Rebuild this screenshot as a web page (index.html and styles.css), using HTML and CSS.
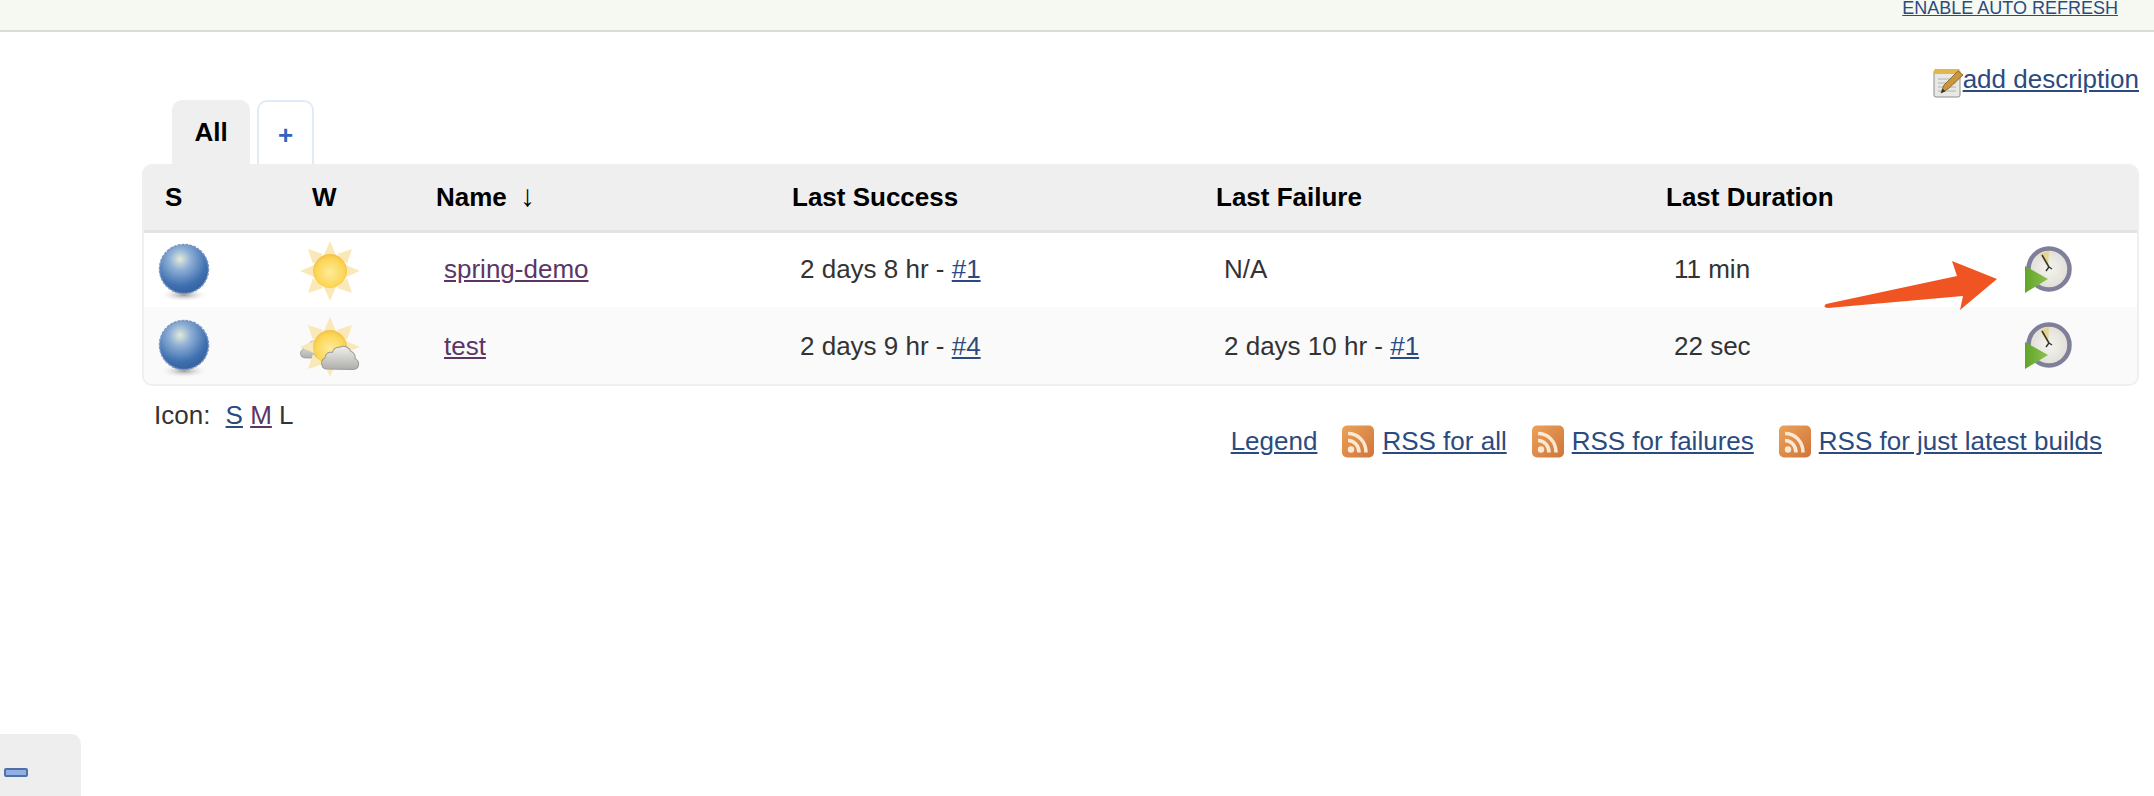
FILE: index.html
```html
<!DOCTYPE html>
<html lang="en">

<head>
    <meta charset="UTF-8">
    <title>All [Jenkins]</title>
    <link rel="stylesheet" href="styles.css">
</head>

<body>
    <!-- icon definitions -->
    <svg class="defs" width="0" height="0">
        <defs>
            <radialGradient id="ballGrad" cx="0.42" cy="0.3" r="0.72">
                <stop offset="0" stop-color="#e4ebd8" />
                <stop offset="0.3" stop-color="#8fb0d6" />
                <stop offset="0.75" stop-color="#3f70b0" />
                <stop offset="1" stop-color="#35609c" />
            </radialGradient>
            <radialGradient id="shadowGrad">
                <stop offset="0" stop-color="#999" />
                <stop offset="1" stop-color="#fff" stop-opacity="0" />
            </radialGradient>
            <radialGradient id="sunGrad" cx="0.5" cy="0.55" r="0.55">
                <stop offset="0" stop-color="#fdeb9c" />
                <stop offset="0.75" stop-color="#fcd655" />
                <stop offset="1" stop-color="#f2c146" />
            </radialGradient>
            <linearGradient id="cloudGrad" x1="0" y1="0" x2="0" y2="1">
                <stop offset="0" stop-color="#efefed" />
                <stop offset="1" stop-color="#aeaeab" />
            </linearGradient>
            <radialGradient id="clockGrad" cx="0.5" cy="0.5" r="0.55">
                <stop offset="0" stop-color="#f4f4ee" />
                <stop offset="1" stop-color="#dedbd4" />
            </radialGradient>
            <linearGradient id="triGrad" x1="0" y1="0" x2="1" y2="0">
                <stop offset="0" stop-color="#5fa528" />
                <stop offset="1" stop-color="#8cc152" />
            </linearGradient>
            <linearGradient id="rssGrad" x1="0" y1="0" x2="1" y2="1">
                <stop offset="0" stop-color="#eba258" />
                <stop offset="1" stop-color="#d0743a" />
            </linearGradient>

            <symbol id="ball" viewBox="0 0 52 60">
                <ellipse cx="26" cy="52" rx="25" ry="7" fill="url(#shadowGrad)" />
                <circle cx="26" cy="26" r="24.5" fill="url(#ballGrad)" stroke="#7b97c4" stroke-width="1.5" stroke-dasharray="3 1" />
            </symbol>

            <symbol id="sunRays" viewBox="0 0 60 60">
                <g fill="#fbe8b8">
                    <path d="M30 0l6 14h-12z" />
                    <path d="M30 60l-6-14h12z" />
                    <path d="M0 30l14-6v12z" />
                    <path d="M60 30l-14 6v-12z" />
                    <path d="M8 8l15 5-10 10z" />
                    <path d="M52 8l-5 15-10-10z" />
                    <path d="M8 52l5-15 10 10z" />
                    <path d="M52 52l-15-5 10-10z" />
                </g>
                <circle cx="30" cy="30" r="17" fill="url(#sunGrad)" />
            </symbol>

            <symbol id="cloud" viewBox="0 0 40 28">
                <path d="M7 27a5.500 5.500 0 0 1-2-10.500a5.500 5.500 0 0 1 7-5.500a7 7 0 0 1 7-5a8 8 0 0 1 11 4a6 6 0 0 1 4 7a5.500 5.500 0 0 1-1 10.500z" fill="url(#cloudGrad)" stroke="#9c9c9a" stroke-width="1" />
            </symbol>

            <symbol id="clock" viewBox="0 0 48 48">
                <circle cx="25" cy="23" r="20.500" fill="url(#clockGrad)" stroke="#7f7f9a" stroke-width="4.500" />
                <path d="M25 5l-9 3 8 14z" fill="#e6d592" />
                <path d="M18 9l7 12-3 4M25 21l3 2" fill="none" stroke="#333" stroke-width="1.500" />
                <path d="M1 20l23 13-23 14z" fill="url(#triGrad)" />
            </symbol>

            <symbol id="rss" viewBox="0 0 32 32">
                <rect width="32" height="32" rx="5" fill="url(#rssGrad)" />
                <circle cx="9" cy="24" r="3.200" fill="#fbe8d2" />
                <path d="M6 15c6 0 11 5 11 12M6 8c10 0 18 8 18 19" fill="none" stroke="#fbe8d2" stroke-width="3.600" />
            </symbol>

            <symbol id="note" viewBox="0 0 30 30">
                <rect x="1" y="2" width="26" height="27" rx="2" fill="#e8e8e4" stroke="#8c8c88" />
                <rect x="1" y="1" width="26" height="5" rx="1.500" fill="#e3b64c" />
                <path d="M5 11h18M5 15h18M5 19h18M5 23h18" stroke="#c4c4c0" stroke-width="1.500" />
                <path d="M8 25l3-8 14-14 5 4-15 14z" fill="#c9963e" stroke="#7d5c24" stroke-width="0.800" />
                <path d="M8 25l1.500-4.500 3 3z" fill="#333" />
            </symbol>
        </defs>
    </svg>

    <div class="topBar">
        <a href="#" class="autoRefresh">ENABLE AUTO REFRESH</a>
    </div>

    <main class="content">
        <div class="descRow">
            <svg class="noteIcon"><use href="#note" /></svg>
            <a href="#">add description</a>
        </div>

        <div class="tabs">
            <div class="tab active">All</div>
            <div class="tab add">+</div>
        </div>

        <div class="tableWrap">
            <table class="jobs">
                <thead>
                    <tr>
                        <th class="colS">S</th>
                        <th class="colW">W</th>
                        <th class="colName">Name <span class="sortArrow">↓</span></th>
                        <th class="colSuccess">Last Success</th>
                        <th class="colFailure">Last Failure</th>
                        <th class="colDuration">Last Duration</th>
                        <th class="colBuild"></th>
                    </tr>
                </thead>
                <tbody>
                    <tr>
                        <td><svg class="ballIcon"><use href="#ball" /></svg></td>
                        <td>
                            <span class="weather"><svg class="sunIcon"><use href="#sunRays" /></svg></span>
                        </td>
                        <td><a href="#" class="visited">spring-demo</a></td>
                        <td>2 days 8 hr - <a href="#">#1</a></td>
                        <td>N/A</td>
                        <td>11 min</td>
                        <td><svg class="buildIcon"><use href="#clock" /></svg></td>
                    </tr>
                    <tr class="alt">
                        <td><svg class="ballIcon"><use href="#ball" /></svg></td>
                        <td>
                            <span class="weather">
                                <svg class="cloudBack"><use href="#cloud" /></svg>
                                <svg class="sunIcon"><use href="#sunRays" /></svg>
                                <svg class="cloudFront"><use href="#cloud" /></svg>
                            </span>
                        </td>
                        <td><a href="#" class="visited">test</a></td>
                        <td>2 days 9 hr - <a href="#">#4</a></td>
                        <td>2 days 10 hr - <a href="#">#1</a></td>
                        <td>22 sec</td>
                        <td><svg class="buildIcon"><use href="#clock" /></svg></td>
                    </tr>
                </tbody>
            </table>
        </div>

        <div class="tableFoot">
            <div class="iconSize">Icon: <a href="#" class="sizeFirst">S</a> <a href="#" class="visited">M</a> L</div>
            <div class="feeds">
                <a href="#" class="legend">Legend</a>
                <span class="feed"><svg class="rssIcon"><use href="#rss" /></svg><a href="#">RSS for all</a></span>
                <span class="feed"><svg class="rssIcon"><use href="#rss" /></svg><a href="#">RSS for failures</a></span>
                <span class="feed"><svg class="rssIcon"><use href="#rss" /></svg><a href="#">RSS for just latest builds</a></span>
            </div>
        </div>
    </main>

    <!-- annotation drawn on top of the screenshot -->
    <svg class="arrow" viewBox="0 0 180 54">
        <path d="M4 45L135 17L130 2L175 20L138 51L141 37L6 49Q0 48 4 45Z" fill="#f05423" />
    </svg>

    <div class="cornerBox"><span class="cornerMark"></span></div>
</body>

</html>
```

FILE: styles.css
```css
/* reset */
* {
    box-sizing: border-box;
}

html,
body {
    height: 100%;
    overflow: hidden;
}

body {
    margin: 0;
    position: relative;
    font-family: "Liberation Sans", Arial, sans-serif;
    font-size: 26px;
    color: #333;
    background: #fff;
}

a {
    color: #2b4b80;
    text-decoration: underline;
}

a.visited {
    color: #5c3566;
}

svg {
    display: block;
}

.defs {
    position: absolute;
}

/* top bar */
.topBar {
    height: 32px;
    background: #f5f9f1;
    border-bottom: 2px solid #d9dcd4;
    padding-right: 36px;
    display: flex;
    justify-content: flex-end;
    align-items: flex-end;
    overflow: hidden;
}

.autoRefresh {
    font-size: 18px;
    line-height: 18px;
    margin-bottom: 13px;
}

/* content */
.content {
    padding: 0 15px 0 142px;
}

.descRow {
    height: 68px;
    padding-top: 31px;
    display: flex;
    justify-content: flex-end;
    align-items: flex-start;
    line-height: 32px;
}

.noteIcon {
    width: 30px;
    height: 30px;
    margin-top: 5px;
    filter: blur(0.4px);
}

/* tabs */
.tabs {
    display: flex;
    gap: 7px;
    margin-left: 30px;
    height: 64px;
}

.tab {
    border-radius: 10px 10px 0 0;
    display: flex;
    align-items: center;
    justify-content: center;
}

.tab.active {
    width: 78px;
    background: #efefef;
    font-weight: bold;
    color: #000;
}

.tab.add {
    width: 57px;
    height: 65px;
    border: 2px solid #e0ebfa;
    border-bottom: none;
    color: #3264c0;
    font-weight: bold;
    padding-top: 4px;
}

/* table */
.tableWrap {
    position: relative;
    border: 2px solid #efefef;
    border-radius: 10px;
    overflow: hidden;
    height: 222px;
}

.jobs {
    width: 100%;
    table-layout: fixed;
    border-collapse: collapse;
}

.jobs th {
    height: 65px;
    padding: 0 0 0 21px;
    background: #efefef;
    border-bottom: 3px solid #e3e3e3;
    text-align: left;
    font-size: 26px;
    color: #000;
}

.jobs td {
    height: 76px;
    padding: 0 0 0 29px;
}

.jobs tr.alt td {
    height: 78px;
    background: #fafafa;
}

.jobs td:first-child {
    padding-left: 14px;
}

.jobs td:nth-child(2) {
    padding-left: 9px;
}

.colS {
    width: 147px;
}

.colW {
    width: 124px;
}

.colName {
    width: 356px;
}

.colSuccess {
    width: 424px;
}

.colFailure {
    width: 450px;
}

.colDuration {
    width: 352px;
}

.jobs td:last-child {
    padding-left: 27px;
}

.sortArrow {
    font-size: 30px;
    line-height: 0;
    font-weight: normal;
    margin-left: 6px;
}

/* icons */
.ballIcon {
    width: 52px;
    height: 60px;
    margin-top: 6px;
    filter: blur(0.4px);
}

.weather {
    display: block;
    position: relative;
    width: 64px;
    height: 60px;
    margin-top: 2px;
    filter: blur(0.4px);
}

.sunIcon {
    position: relative;
    width: 60px;
    height: 60px;
}

.cloudBack {
    position: absolute;
    left: -1px;
    top: 19px;
    width: 32px;
    height: 23px;
}

.cloudFront {
    position: absolute;
    left: 19px;
    top: 24px;
    width: 43px;
    height: 29px;
    z-index: 1;
}

.buildIcon {
    width: 48px;
    height: 48px;
    filter: blur(0.6px);
}

.rssIcon {
    width: 32px;
    height: 33px;
    flex: none;
    filter: blur(0.4px);
}

/* below the table */
.tableFoot {
    display: flex;
    justify-content: space-between;
    padding: 14px 37px 0 12px;
}

.iconSize {
    line-height: 30px;
}

.sizeFirst {
    margin-left: 8px;
}

.feeds {
    display: flex;
    align-items: center;
    gap: 25px;
    margin-top: 25px;
}

.feed {
    display: flex;
    align-items: center;
    gap: 8px;
}

/* annotation */
.arrow {
    position: absolute;
    left: 1822px;
    top: 259px;
    width: 180px;
    height: 54px;
}

.cornerBox {
    position: absolute;
    left: 0;
    bottom: 0;
    width: 81px;
    height: 62px;
    background: #eee;
    border-radius: 0 10px 0 0;
}

.cornerMark {
    position: absolute;
    left: 4px;
    top: 34px;
    width: 24px;
    height: 9px;
    background: #8fb0e0;
    border: 2px solid #4f6fa8;
    border-radius: 2px;
}
```
